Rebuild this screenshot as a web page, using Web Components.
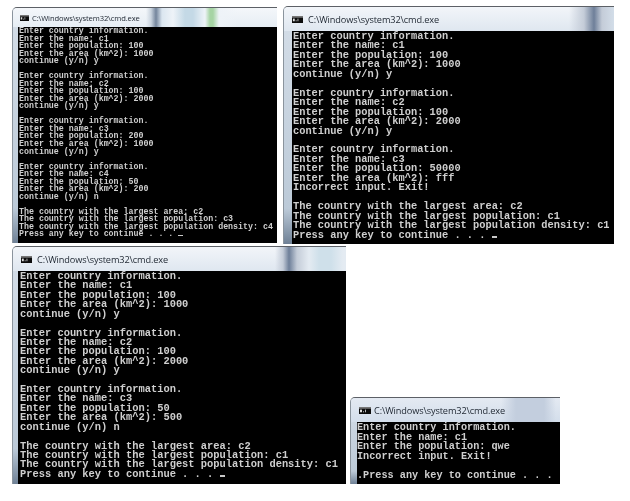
<!DOCTYPE html>
<html>
<head>
<meta charset="utf-8">
<style>
  html, body { margin: 0; background: #fff; }
  body { position: relative; width: 630px; height: 501px; overflow: hidden; }
</style>
</head>
<body>
<cmd-window style="--x:12px;--y:7px;--w:265px;--h:236px;--bar:19px;--frame:5px;--ti:1px;--pt:0px;--fs:8.3px;--lh:7.53px;--tfs:7.6px;--ix:7px;--iw:9px;--ih:6px;--ig:3px;--bar-bg:linear-gradient(90deg,transparent 133px,#c9d3de 138px,#74859c 143px,#dbe6f0 149px,#eef3f8 160px,#c4d9e6 172px,#c4d9e6 180px,#eef3f8 192px,#a6d4a4 197px,#a6d4a4 200px,#eef3f8 206px,transparent 225px),linear-gradient(#f4f7fa,#e6edf4)" title-text="C:\Windows\system32\cmd.exe">Enter country information.
Enter the name: c1
Enter the population: 100
Enter the area (km^2): 1000
continue (y/n) y

Enter country information.
Enter the name: c2
Enter the population: 100
Enter the area (km^2): 2000
continue (y/n) y

Enter country information.
Enter the name: c3
Enter the population: 200
Enter the area (km^2): 1000
continue (y/n) y

Enter country information.
Enter the name: c4
Enter the population: 50
Enter the area (km^2): 200
continue (y/n) n

The country with the largest area: c2
The country with the largest population: c3
The country with the largest population density: c4
Press any key to continue . . . <cmd-cursor></cmd-cursor></cmd-window>

<cmd-window style="--x:283px;--y:6px;--w:331px;--h:238px;--bar:24px;--frame:8px;--ti:1px;--pt:1px;--fs:10.35px;--lh:9.45px;--tfs:9.2px;--ix:8px;--iw:11px;--ih:7px;--ig:5px;--bar-bg:linear-gradient(90deg,transparent 285px,#c4ccd8 300px,#6e7f99 310px,#c4ccd8 318px,#d4dfea 331px),linear-gradient(#f2f5f9,#dfe7f0)" title-text="C:\Windows\system32\cmd.exe">Enter country information.
Enter the name: c1
Enter the population: 100
Enter the area (km^2): 1000
continue (y/n) y

Enter country information.
Enter the name: c2
Enter the population: 100
Enter the area (km^2): 2000
continue (y/n) y

Enter country information.
Enter the name: c3
Enter the population: 50000
Enter the area (km^2): fff
Incorrect input. Exit!

The country with the largest area: c2
The country with the largest population: c1
The country with the largest population density: c1
Press any key to continue . . . <cmd-cursor></cmd-cursor></cmd-window>

<cmd-window style="--x:12px;--y:246px;--w:334px;--h:238px;--bar:24px;--frame:5px;--ti:2px;--pt:1px;--fs:10.4px;--lh:9.42px;--tfs:9.2px;--ix:8px;--iw:11px;--ih:7px;--ig:5px;--bar-bg:linear-gradient(90deg,transparent 262px,#c4ccd8 270px,#6e7f99 276px,#c4ccd8 284px,#e4ebf2 296px,#cfe0ea 306px,#cfe0ea 318px,#e4ebf2 330px),linear-gradient(#f2f5f9,#dfe7f0)" title-text="C:\Windows\system32\cmd.exe">Enter country information.
Enter the name: c1
Enter the population: 100
Enter the area (km^2): 1000
continue (y/n) y

Enter country information.
Enter the name: c2
Enter the population: 100
Enter the area (km^2): 2000
continue (y/n) y

Enter country information.
Enter the name: c3
Enter the population: 50
Enter the area (km^2): 500
continue (y/n) n

The country with the largest area: c2
The country with the largest population: c1
The country with the largest population density: c1
Press any key to continue . . . <cmd-cursor></cmd-cursor></cmd-window>

<cmd-window style="--x:350px;--y:397px;--w:210px;--h:87px;--bar:24px;--frame:6px;--ti:0px;--pt:1px;--fs:10.2px;--lh:9.5px;--tfs:9.2px;--ix:8px;--iw:12px;--ih:7px;--ig:3px;--bar-bg:linear-gradient(90deg,transparent 150px,#c3cede 165px,#c3cede 193px,transparent 205px),linear-gradient(#e4eaf2,#d3deeb)" title-text="C:\Windows\system32\cmd.exe">Enter country information.
Enter the name: c1
Enter the population: qwe
Incorrect input. Exit!

.Press any key to continue . . .</cmd-window>

<script>
class CmdCursor extends HTMLElement {
  constructor() {
    super();
    this.attachShadow({ mode: 'open' }).innerHTML =
      '<style>:host { display: inline-block; width: .55em; height: 1.5px; background: #c8c8c8; }</style>';
  }
}
customElements.define('cmd-cursor', CmdCursor);

class CmdWindow extends HTMLElement {
  constructor() {
    super();
    this.shadowDOM = this.attachShadow({ mode: 'open' });
  }

  connectedCallback() {
    this.shadowDOM.innerHTML = `
      <style>
        :host {
          position: absolute;
          left: var(--x);
          top: var(--y);
          width: var(--w);
          height: var(--h);
          display: flex;
          flex-direction: column;
          box-sizing: border-box;
          overflow: hidden;
          background: linear-gradient(#d5dee8, #bccad8 85%, #6f8196);
          border-top: 1px solid #5c6066;
          border-left: 1px solid #8b949d;
          border-radius: 5px 0 0 0;
        }
        .bar {
          flex: 0 0 var(--bar);
          display: flex;
          align-items: center;
          gap: var(--ig);
          padding-left: var(--ix);
          background: var(--bar-bg);
        }
        .icon { flex: none; width: var(--iw); height: var(--ih); }
        .title {
          font: var(--tfs) "Open Sans", "Liberation Sans", sans-serif;
          letter-spacing: -.12px;
          color: #1d2530;
          white-space: nowrap;
          filter: blur(.2px);
        }
        .console {
          flex: 1;
          margin-left: var(--frame);
          padding: var(--pt) 0 0 var(--ti);
          background: #000;
          color: #cfcfcf;
          font: bold var(--fs)/var(--lh) "Liberation Mono", monospace;
          white-space: pre;
          overflow: hidden;
        }
        .text { filter: blur(.3px); }
      </style>
      <div class="bar">
        <svg class="icon" viewBox="0 0 12 8" preserveAspectRatio="none">
          <rect width="12" height="8" fill="#777"></rect>
          <rect y="2" width="12" height="6" fill="#0c0c0c"></rect>
          <rect x="1" y="3" width="2" height="3" fill="#ddd"></rect>
          <rect x="4" y="5" width="1" height="1" fill="#ddd"></rect>
          <rect x="6" y="3" width="1" height="3" fill="#bbb"></rect>
        </svg>
        <span class="title">${this.getAttribute('title-text')}</span>
      </div>
      <div class="console"><div class="text"><slot></slot></div></div>`;
  }
}
customElements.define('cmd-window', CmdWindow);
</script>
</body>
</html>
